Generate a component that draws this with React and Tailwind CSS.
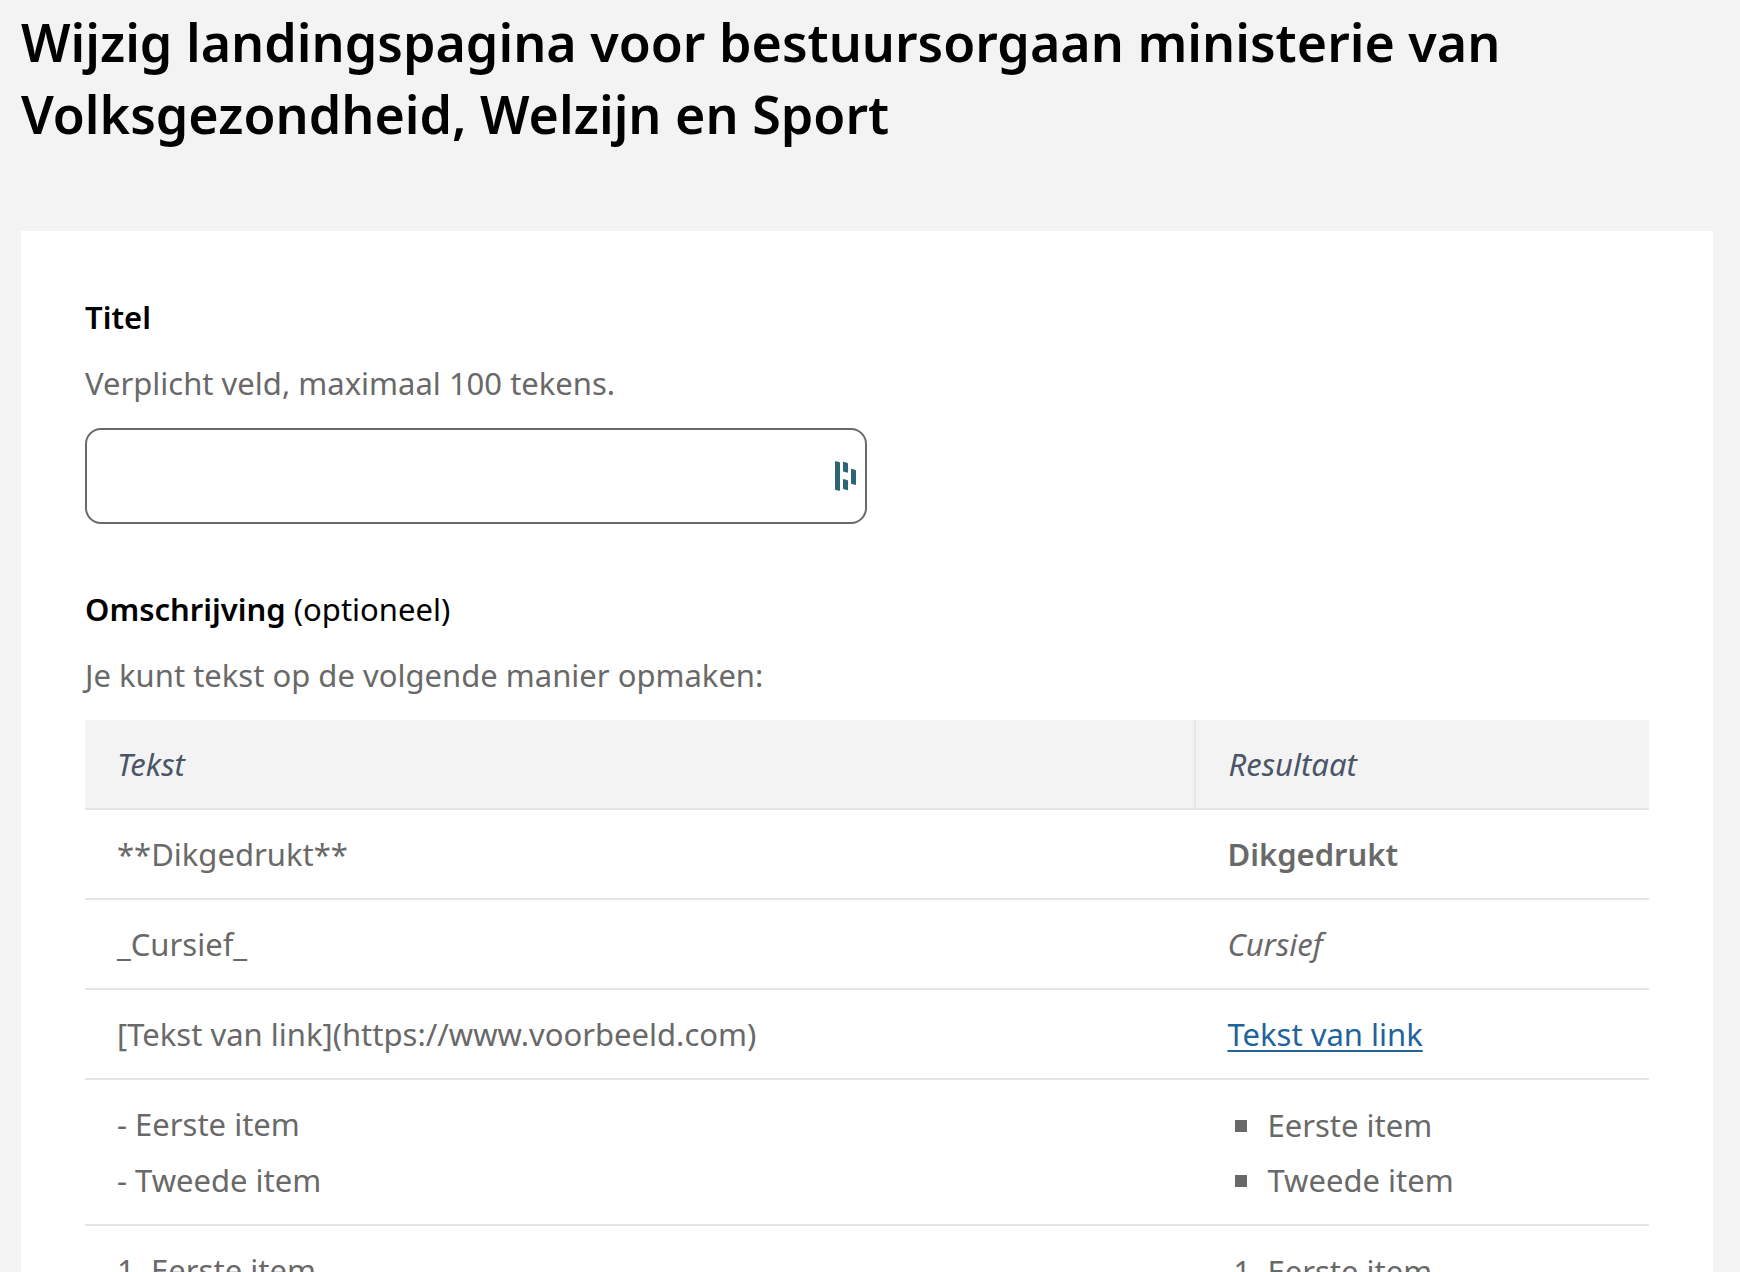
import React from "react";

function ManagerIcon() {
  return (
    <svg viewBox="0 0 63 90" className="h-[30px] w-[21px] fill-[#2c6577]" aria-hidden="true">
      <path d="M0 2Q0 0 3 1L13 3Q15 4 15 6V88Q15 90 12 89L2 87Q0 86 0 84Z" />
      <path d="M24 2L37 5Q39 6 39 8V35L26 32Q24 31 24 29Z" />
      <path d="M24 54L37 57Q39 58 39 60V88L26 85Q24 84 24 82Z" />
      <path d="M48 23L61 26Q63 27 63 29V72L50 69Q48 68 48 66Z" />
    </svg>
  );
}

function Row({ text, children }) {
  return (
    <tr className="border-b-2 border-[#e6e6e6] align-top">
      <td className="px-8 py-4">{text}</td>
      <td className="px-8 py-4">{children}</td>
    </tr>
  );
}

export default function App() {
  return (
    <div className="h-screen overflow-hidden bg-[#f3f3f3] font-['Noto_Sans',sans-serif] text-[31px] leading-[56px] text-black">
      <main className="pr-[27px] pl-[21px]">
        <h1 className="pt-1.5 pb-[81px] text-[52px] leading-[72px] font-semibold">
          Wijzig landingspagina voor bestuursorgaan ministerie van Volksgezondheid, Welzijn en Sport
        </h1>
        <form className="flex min-h-screen flex-col gap-[57px] bg-white px-16 pt-[58px]">
          <div>
            <label htmlFor="titel" className="mb-2.5 block font-semibold">
              Titel
            </label>
            <p id="titel-hint" className="mb-[17px] text-[#696969]">
              Verplicht veld, maximaal 100 tekens.
            </p>
            <div className="relative w-1/2">
              <input
                id="titel"
                type="text"
                aria-describedby="titel-hint"
                className="block h-24 w-full rounded-2xl border-2 border-[#696969] bg-white px-4"
              />
              <span className="pointer-events-none absolute inset-y-0 right-[11px] flex items-center">
                <ManagerIcon />
              </span>
            </div>
          </div>
          <div>
            <h2 className="mb-2.5">
              <strong className="font-semibold">Omschrijving</strong> (optioneel)
            </h2>
            <p className="mb-[17px] text-[#696969]">Je kunt tekst op de volgende manier opmaken:</p>
            <table className="w-full border-collapse text-left text-[#696969]">
              <thead>
                <tr className="border-b-2 border-[#e6e6e6] bg-[#f3f3f3] text-[#4a5568] italic">
                  <th className="w-[71%] border-r-2 border-[#e6e6e6] px-8 py-4 font-normal">Tekst</th>
                  <th className="px-8 py-4 font-normal">Resultaat</th>
                </tr>
              </thead>
              <tbody>
                <Row text="**Dikgedrukt**">
                  <strong className="font-semibold">Dikgedrukt</strong>
                </Row>
                <Row text="_Cursief_">
                  <em>Cursief</em>
                </Row>
                <Row text="[Tekst van link](https://www.voorbeeld.com)">
                  <a href="#voorbeeld" className="text-[#22639b] underline decoration-2 underline-offset-4">
                    Tekst van link
                  </a>
                </Row>
                <Row
                  text={
                    <>
                      - Eerste item
                      <br />- Tweede item
                    </>
                  }
                >
                  <ul className="pt-0.5 leading-[55px]">
                    {["Eerste item", "Tweede item"].map((item) => (
                      <li key={item} className="flex items-center before:mr-5 before:ml-2 before:size-3 before:bg-[#696969]">
                        {item}
                      </li>
                    ))}
                  </ul>
                </Row>
                <Row text="1. Eerste item">
                  <ol className="list-decimal pt-0.5 pl-10 leading-[55px]">
                    <li>Eerste item</li>
                  </ol>
                </Row>
              </tbody>
            </table>
          </div>
        </form>
      </main>
    </div>
  );
}
